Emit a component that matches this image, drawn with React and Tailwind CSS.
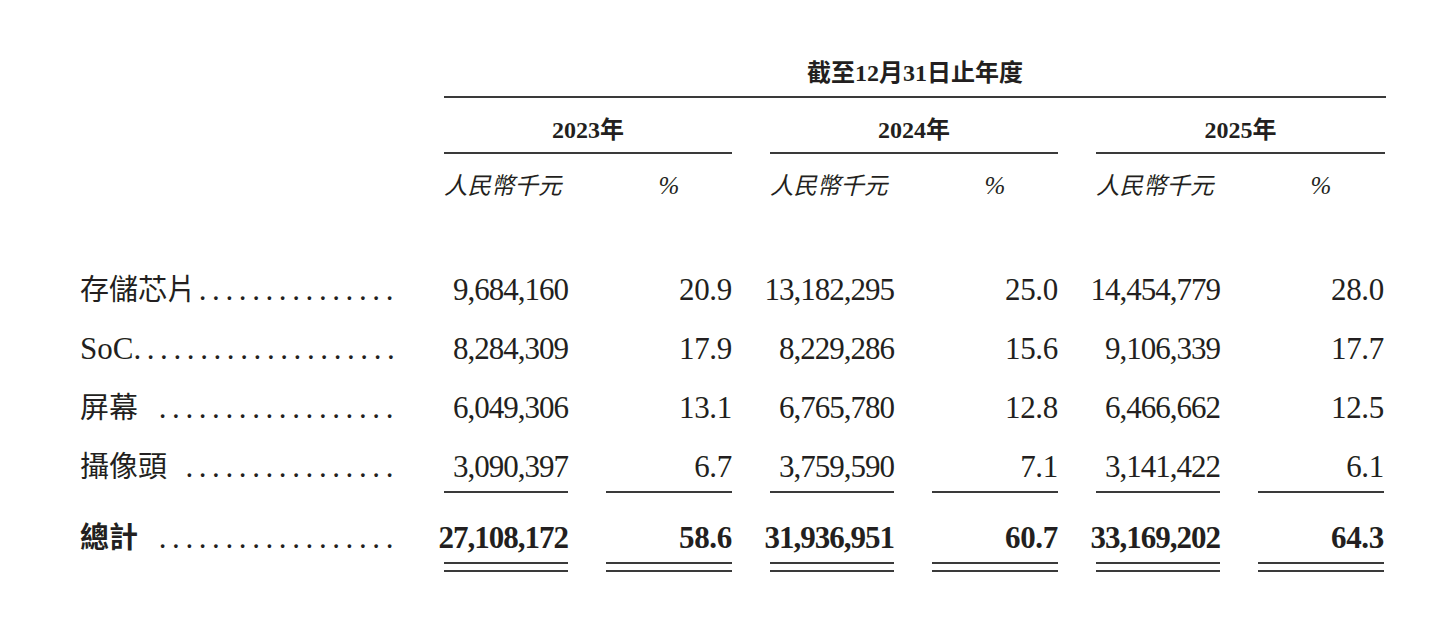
const serif = "font-['Liberation_Serif','Noto_Sans_CJK_TC',serif]"

const years = [
  { year: '2023年' },
  { year: '2024年' },
  { year: '2025年' },
]

const rows = [
  { label: '存儲芯片', dots: 15, values: [['9,684,160', '20.9'], ['13,182,295', '25.0'], ['14,454,779', '28.0']] },
  { label: 'SoC', dots: 20, values: [['8,284,309', '17.9'], ['8,229,286', '15.6'], ['9,106,339', '17.7']] },
  { label: '屏幕', dots: 18, values: [['6,049,306', '13.1'], ['6,765,780', '12.8'], ['6,466,662', '12.5']] },
  { label: '攝像頭', dots: 16, values: [['3,090,397', '6.7'], ['3,759,590', '7.1'], ['3,141,422', '6.1']], rule: 'single' },
  { label: '總計', dots: 18, values: [['27,108,172', '58.6'], ['31,936,951', '60.7'], ['33,169,202', '64.3']], rule: 'double', bold: true },
]

function Cell({ children, rule, className }) {
  return (
    <div className={`flex flex-col items-end ${className}`}>
      <span className="whitespace-nowrap leading-[36px]">{children}</span>
      {rule === 'single' ? <div className="mt-[6px] h-[2px] w-full bg-[#3a3a3a]" /> : null}
      {rule === 'double' ? (
        <div className="mt-[6px] h-[10px] w-full border-y-[2.5px] border-[#3a3a3a]" />
      ) : null}
    </div>
  )
}

function DataRow({ row, first }) {
  return (
    <div
      className={`grid grid-cols-[326px_288px_288px_289px] items-start gap-x-[38px] ${
        first ? 'mt-[72px]' : row.rule === 'double' ? 'mt-[27px]' : 'mt-[23px]'
      } ${row.bold ? 'font-bold' : ''}`}
    >
      <div className="flex items-center pr-[7px] text-[29px] leading-[36px]">
        <span className={`shrink-0 whitespace-nowrap ${row.label === 'SoC' ? 'text-[31px]' : ''}`}>
          {row.label}
        </span>
        <span className="ml-auto whitespace-nowrap text-[31px] font-normal tracking-[5.6px]">
          {'.'.repeat(row.dots)}
        </span>
      </div>
      {row.values.map(([amount, pct], i) => (
        <div key={i} className="flex text-[31px]">
          <Cell rule={row.rule} className="w-[124px] tracking-[-1px]">
            {amount}
          </Cell>
          <Cell rule={row.rule} className="ml-[38px] w-[126px] tracking-[-0.3px]">
            {pct}
          </Cell>
        </div>
      ))}
    </div>
  )
}

export default function App() {
  return (
    <div className={`min-h-screen bg-white pl-[80px] pt-[59px] text-[#231f20] ${serif}`}>
      <div className="w-[1306px]">
        <div className="ml-[364px] border-b-2 border-[#3a3a3a] pb-[9px] text-center text-[24px] font-bold leading-[28px]">
          截至12月31日止年度
        </div>

        <div className="mt-[18px] grid grid-cols-[326px_288px_288px_289px] gap-x-[38px]">
          {years.map((y, i) => (
            <div
              key={y.year}
              className={`${i === 0 ? 'col-start-2' : ''} border-b-2 border-[#3a3a3a] pb-[8px] text-center text-[24px] font-bold leading-[28px]`}
            >
              {y.year}
            </div>
          ))}
        </div>

        <div className="mt-[18px] grid grid-cols-[326px_288px_288px_289px] gap-x-[38px] text-[23.5px] italic leading-[28px]">
          {years.map((y, i) => (
            <div key={y.year} className={`${i === 0 ? 'col-start-2' : ''} flex`}>
              <span className="w-[124px] whitespace-nowrap">人民幣千元</span>
              <span className="ml-[38px] w-[126px] text-center text-[25px]">%</span>
            </div>
          ))}
        </div>

        {rows.map((row, i) => (
          <DataRow key={row.label} row={row} first={i === 0} />
        ))}
      </div>
    </div>
  )
}
